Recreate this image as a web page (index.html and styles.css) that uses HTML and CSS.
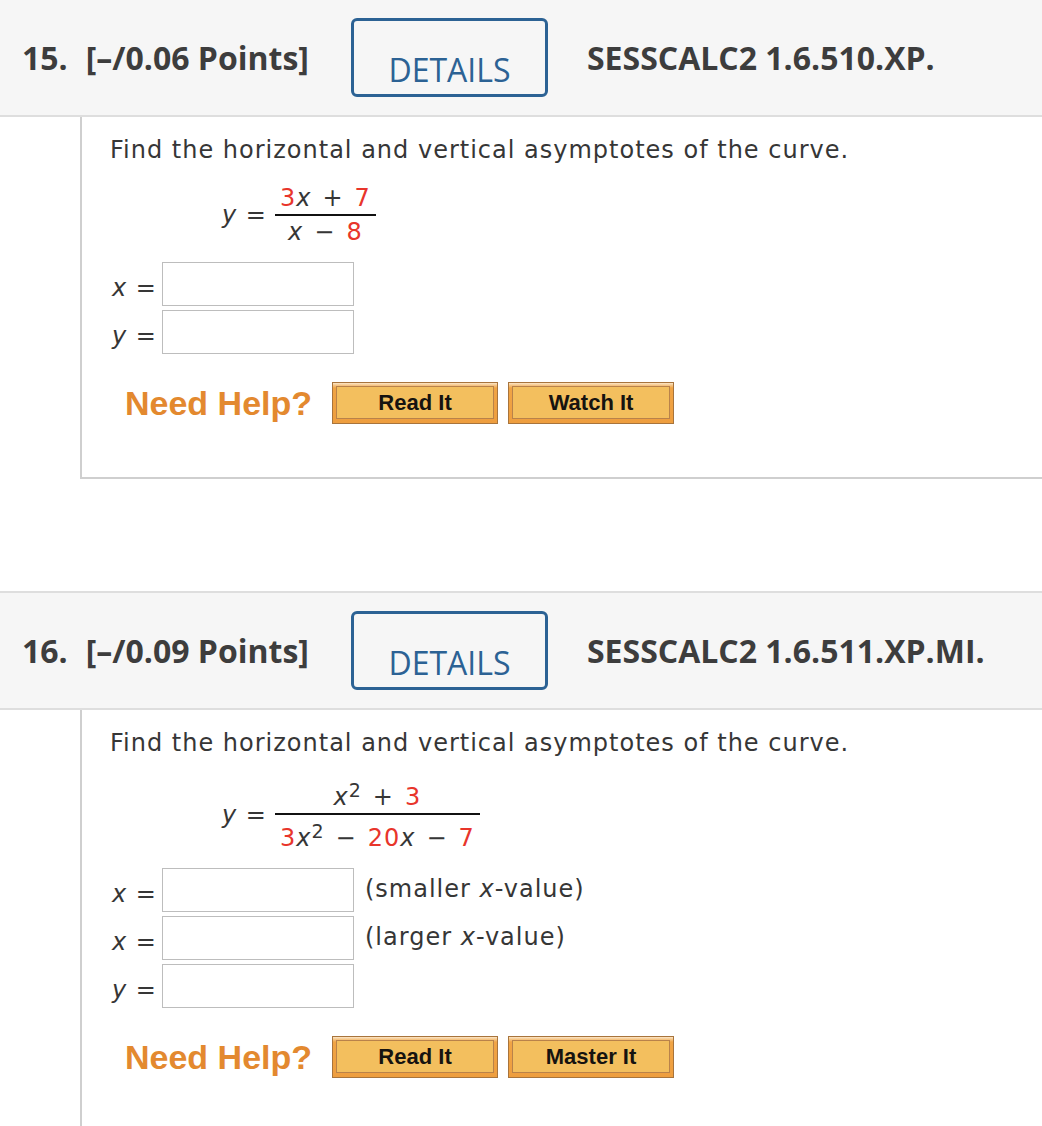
FILE: index.html
```html
<!DOCTYPE html>
<html lang="en">
<head>
<meta charset="utf-8">
<title>Questions</title>
<link rel="stylesheet" href="styles.css">
</head>
<body>
<div class="page">
  <section class="question">
    <div class="qhead">
      <span class="qnum">15.</span>
      <span class="pts">[–/0.06 Points]</span>
      <a class="details">DETAILS</a>
      <span class="code">SESSCALC2 1.6.510.XP.</span>
    </div>
    <div class="qbody">
      <p class="prompt">Find the horizontal and vertical asymptotes of the curve.</p>
      <div class="eq">
        <span class="lhs"><i>y</i> =</span>
        <span class="frac">
          <span class="num"><span class="r">3</span><i>x</i><span class="op">+</span><span class="r">7</span></span>
          <span class="den"><i>x</i><span class="op">−</span><span class="r">8</span></span>
        </span>
      </div>
      <div class="answers">
        <div class="row"><span class="lbl"><i>x</i> =</span><span class="box"></span></div>
        <div class="row"><span class="lbl"><i>y</i> =</span><span class="box"></span></div>
      </div>
      <div class="help">
        <span class="needhelp">Need Help?</span>
        <a class="hbtn"><span class="hin">Read It</span></a>
        <a class="hbtn"><span class="hin">Watch It</span></a>
      </div>
    </div>
  </section>

  <section class="question second">
    <div class="qhead">
      <span class="qnum">16.</span>
      <span class="pts">[–/0.09 Points]</span>
      <a class="details">DETAILS</a>
      <span class="code">SESSCALC2 1.6.511.XP.MI.</span>
    </div>
    <div class="qbody">
      <p class="prompt">Find the horizontal and vertical asymptotes of the curve.</p>
      <div class="eq">
        <span class="lhs"><i>y</i> =</span>
        <span class="frac tall">
          <span class="num"><i>x</i><sup>2</sup><span class="op">+</span><span class="r">3</span></span>
          <span class="den"><span class="r">3</span><i>x</i><sup>2</sup><span class="op">−</span><span class="r">20</span><i>x</i><span class="op">−</span><span class="r">7</span></span>
        </span>
      </div>
      <div class="answers">
        <div class="row"><span class="lbl"><i>x</i> =</span><span class="box"></span><span class="note">(smaller <i>x</i>-value)</span></div>
        <div class="row"><span class="lbl"><i>x</i> =</span><span class="box"></span><span class="note">(larger <i>x</i>-value)</span></div>
        <div class="row"><span class="lbl"><i>y</i> =</span><span class="box"></span></div>
      </div>
      <div class="help">
        <span class="needhelp">Need Help?</span>
        <a class="hbtn"><span class="hin">Read It</span></a>
        <a class="hbtn"><span class="hin">Master It</span></a>
      </div>
    </div>
  </section>
</div>
</body>
</html>
```

FILE: styles.css
```css
html, body {
  margin: 0;
  padding: 0;
  background: #fff;
}
body {
  font-family: "DejaVu Sans", Verdana, sans-serif;
  color: #363636;
  overflow: hidden;
}
.page {
  margin-top: -2px;
}
.question.second {
  margin-top: 112px;
}
.qhead {
  display: flex;
  align-items: center;
  height: 115px;
  background: #f6f6f6;
  border-top: 2px solid #dedede;
  border-bottom: 2px solid #dedede;
  font-family: "Open Sans", sans-serif;
  font-weight: 700;
  font-size: 32px;
  color: #3d3d3d;
  padding-left: 22px;
}
.pts {
  margin-left: 18px;
}
.details {
  box-sizing: border-box;
  width: 197px;
  height: 79px;
  margin-left: 42px;
  border: 3px solid #2c6294;
  border-radius: 6px;
  padding-top: 27px;
  text-align: center;
  font-family: "Open Sans", sans-serif;
  font-weight: 500;
  font-size: 32px;
  line-height: normal;
  color: #2c6294;
}
.code {
  margin-left: 39px;
}
.qbody {
  margin-left: 80px;
  border-left: 2px solid #cfcfcf;
  border-bottom: 2px solid #cfcfcf;
  padding: 19px 0 53px 28px;
  letter-spacing: 1px;
}
.prompt {
  margin: 0;
  font-size: 24px;
  line-height: 28px;
}
i {
  font-style: italic;
}
.r {
  color: #e8352b;
}
.op {
  margin: 0 11px;
}
.eq {
  display: flex;
  align-items: center;
  margin-top: 21px;
  margin-left: 112px;
  font-size: 24px;
}
.lhs {
  line-height: 26px;
  white-space: pre;
}
.frac {
  display: inline-flex;
  flex-direction: column;
  align-items: stretch;
  margin-left: 8px;
  text-align: center;
}
.num, .den {
  line-height: 26px;
  padding: 0 5px;
  white-space: pre;
}
.num {
  padding-bottom: 3px;
  border-bottom: 2px solid #111;
}
.den {
  padding-top: 3px;
}
.frac.tall .num {
  padding-top: 6px;
}
.frac.tall .den {
  padding-top: 10px;
}
sup {
  font-size: 19px;
  line-height: 0;
  vertical-align: 8px;
}
.answers {
  margin-top: 17px;
  display: flex;
  flex-direction: column;
  gap: 4px;
}
.row {
  display: flex;
  align-items: flex-start;
  height: 44px;
}
.lbl {
  width: 52px;
  padding-left: 2px;
  box-sizing: border-box;
  font-size: 24px;
  line-height: 44px;
  padding-top: 4px;
  white-space: pre;
}
.box {
  box-sizing: border-box;
  width: 192px;
  height: 44px;
  border: 1px solid #bdbdbd;
  background: #fff;
}
.note {
  margin-left: 11px;
  font-size: 24px;
  line-height: 44px;
  margin-top: -1px;
}
.help {
  display: flex;
  align-items: center;
  margin-top: 28px;
  padding-left: 15px;
  letter-spacing: 0;
}
.needhelp {
  font-family: "Liberation Sans", Arial, sans-serif;
  font-weight: 700;
  font-size: 34px;
  color: #e3892f;
  margin-right: 20px;
}
.hbtn {
  box-sizing: border-box;
  display: flex;
  width: 166px;
  height: 42px;
  margin-right: 10px;
  border: 1px solid #a8743c;
  padding: 3px 3px 4px;
  background: linear-gradient(#fbe6c8 0, #f6c98e 2px, #f0a445 5px, #ee9e3f 100%);
}
.hin {
  flex: 1;
  display: flex;
  align-items: center;
  justify-content: center;
  border: 1px solid #b9824a;
  background: #f3bf5e;
  font-family: "Liberation Sans", Arial, sans-serif;
  font-weight: 700;
  font-size: 22px;
  color: #161310;
}
```
